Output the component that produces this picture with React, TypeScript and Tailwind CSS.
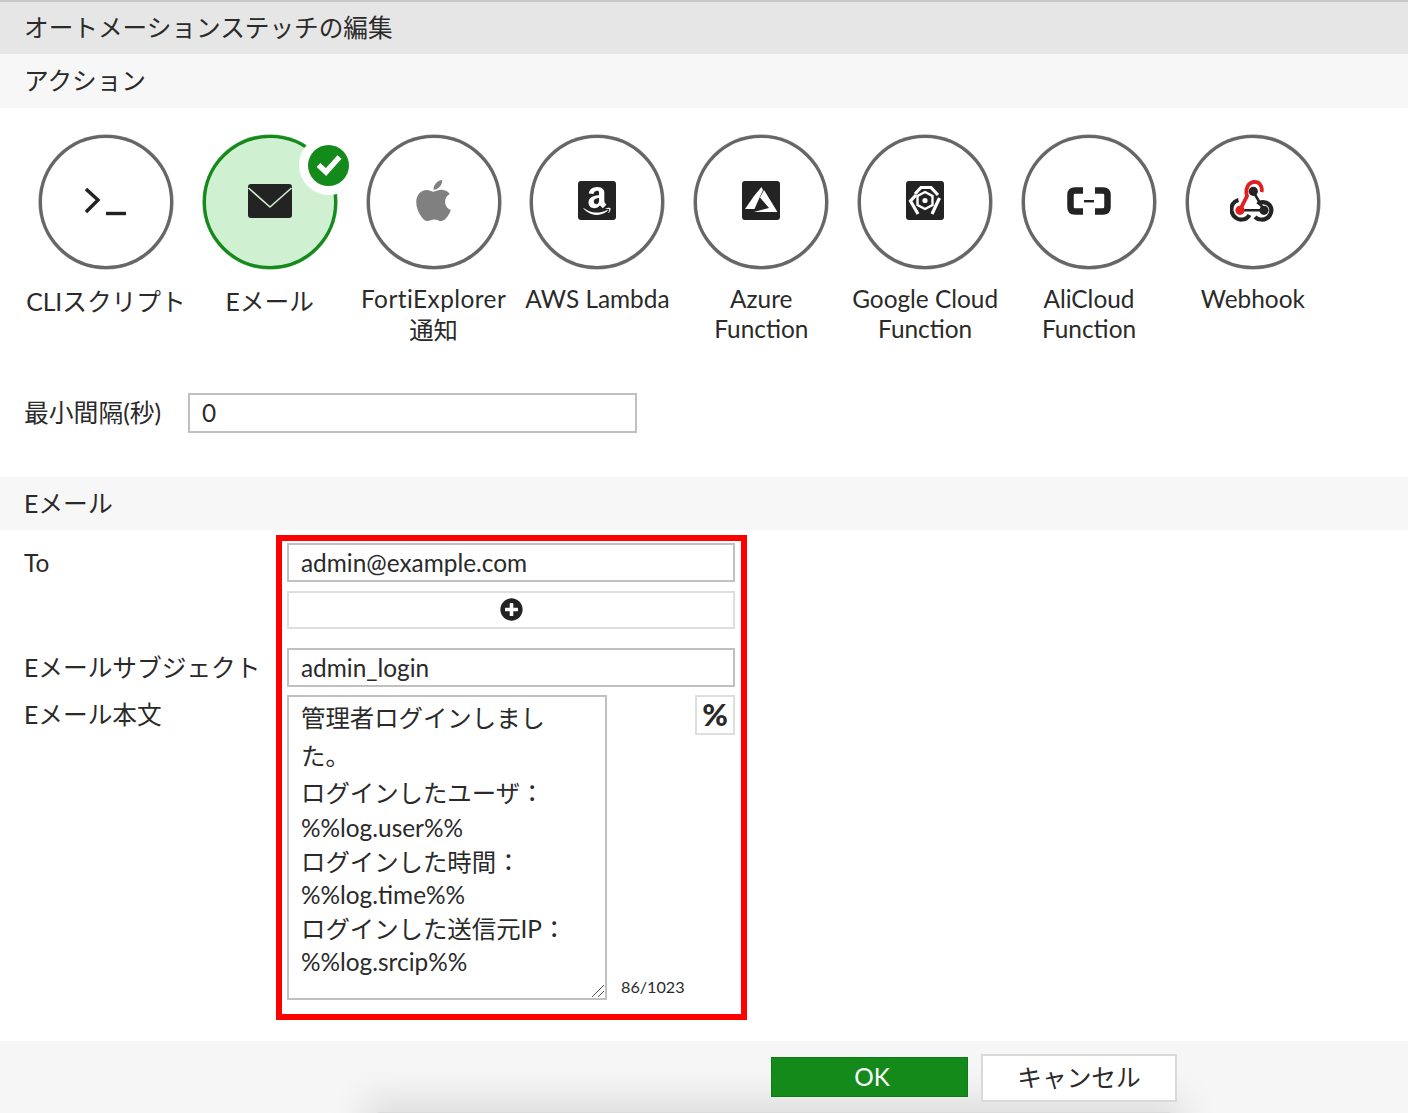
import React from "react";
import { FaApple, FaAmazon, FaPlusCircle } from "react-icons/fa";

const Square = ({ children }: { children: React.ReactNode }) => (
  <div className="flex h-[39px] w-[38px] items-center justify-center rounded-[3px] bg-[#232323] text-white">{children}</div>
);

const Terminal = () => (
  <svg className="ml-[2px] mt-[3px]" width="44" height="30" viewBox="0 0 44 30" fill="none" stroke="#222" strokeWidth="3.4">
    <path d="M1 2 L13 13 L1 25" />
    <path d="M21 26.5 H41" />
  </svg>
);

const Mail = () => (
  <svg width="46" height="36" viewBox="0 0 46 36">
    <rect x="1" y="1" width="44" height="34" rx="3" fill="#232323" />
    <path d="M1.5 5 L23 24 L44.5 5" fill="none" stroke="#d0f0d2" strokeWidth="1.6" />
  </svg>
);

const Azure = () => (
  <Square>
    <svg width="38" height="39" viewBox="0 0 38 39" fill="#fff">
      <polygon points="3,28 12,15 19.5,6 21,9 16,20 12.5,28" />
      <polygon points="22,9 35.5,31 12,31 27,27 18,16.5" />
    </svg>
  </Square>
);

const GoogleFn = () => (
  <Square>
    <svg width="38" height="39" viewBox="0 0 38 39" fill="none" stroke="#fff" strokeWidth="3.2">
      <path d="M9 13 L15 6.5 H25 L32 14" />
      <path d="M10 14 L4.5 20 L12 33" />
      <path d="M33.5 17 L26 33" />
      <path d="M19 11 L26.5 15 V24 L19 28 L11.5 24 V15 Z" strokeWidth="2.4" />
      <circle cx="19" cy="19.5" r="2.6" fill="#fff" stroke="none" />
    </svg>
  </Square>
);

const Ali = () => (
  <svg width="44" height="28" viewBox="0 0 44 28" fill="none">
    <path d="M16 3.5 L8 3.5 Q3.5 3.5 3.5 8 V20 Q3.5 24.5 8 24.5 L16 24.5" stroke="#232323" strokeWidth="6.5" />
    <path d="M28 3.5 L36 3.5 Q40.5 3.5 40.5 8 V20 Q40.5 24.5 36 24.5 L28 24.5" stroke="#232323" strokeWidth="6.5" />
    <rect x="17" y="13" width="10" height="2.4" fill="#232323" />
  </svg>
);

const Webhook = () => (
  <svg width="46" height="42" viewBox="0 0 46 42" fill="none">
    <path d="M23.3 11.3 L34 30.3 H10" stroke="#232323" strokeWidth="2.6" />
    <path d="M8.5 20 C3 21.5 1 26 1.5 30.5 C2.5 37 8 40 12 39.5 C15.5 39.5 18 37.5 19.5 35" stroke="#232323" strokeWidth="4.2" />
    <path d="M28 24.5 C31 20.5 38 22 40.5 26.5 C43 31.5 39.5 40 31 39.5 C28.5 39.5 26.5 38.5 25 37" stroke="#232323" strokeWidth="4.2" />
    <path d="M10 30 L17 16 C15 9 18 2.5 24 2 C29 1.5 33 6 31.5 12" stroke="#e02020" strokeWidth="3.8" />
    <circle cx="23.3" cy="11.3" r="4.6" fill="#232323" />
    <circle cx="34" cy="30.3" r="4.6" fill="#232323" />
    <circle cx="10" cy="30.3" r="4.6" fill="#e02020" />
  </svg>
);

const items: { label: React.ReactNode; icon: React.ReactNode; selected?: boolean; cjk?: boolean }[] = [
  { label: "CLIスクリプト", icon: <Terminal />, cjk: true },
  { label: "Eメール", icon: <Mail />, selected: true, cjk: true },
  { label: <><span className="tracking-[0.45px]">FortiExplorer</span><br /><span className="mt-[1px] block">通知</span></>, icon: <FaApple size={47} color="#808080" /> },
  { label: "AWS Lambda", icon: <Square><FaAmazon size={32} /></Square> },
  { label: <>Azure<br />Function</>, icon: <Azure /> },
  { label: <>Google Cloud<br />Function</>, icon: <GoogleFn /> },
  { label: <>AliCloud<br />Function</>, icon: <Ali /> },
  { label: "Webhook", icon: <Webhook /> },
];

const lines: [string, string][] = [
  ["管理者ログインしまし", "h-[37px]"],
  ["た。", "h-[38px]"],
  ["ログインしたユーザ：", "h-[37px]"],
  ["%%log.user%%", "h-[33px]"],
  ["ログインした時間：", "h-[34px]"],
  ["%%log.time%%", "h-[33px]"],
  ["ログインした送信元IP：", "h-[34px]"],
  ["%%log.srcip%%", "h-[33px]"],
];

export default function App() {
  return (
    <div className="relative flex h-[1113px] flex-col overflow-hidden bg-white font-['Lato','Noto_Sans_CJK_JP',sans-serif] text-[24.4px] text-[#2a2a2a]">
      <header className="flex h-[54px] shrink-0 items-center border-t-2 border-[#c9c9c9] bg-[#e6e6e6] pl-6 text-[24.65px]">
        オートメーションステッチの編集
      </header>
      <div className="flex h-[54px] shrink-0 items-center bg-[#f7f7f7] pl-6 text-[24.65px]">アクション</div>

      <div className="flex pl-6 pt-[27px]">
        {items.map((it, i) => (
          <div key={i} className="flex w-[163.85px] flex-col items-center text-center leading-[30px]">
            <div
              className={
                it.selected
                  ? "relative flex h-[134px] w-[134px] items-center justify-center rounded-full border-[3px] border-[#148a1a] bg-[#d0f0d2] pb-[3px] shadow-[0_0_0_0.6px_#4aa24e]"
                  : "relative flex h-[134px] w-[134px] items-center justify-center rounded-full border-[3px] border-[#666666] bg-white pb-[3px] shadow-[0_0_0_0.6px_#8a8a8a]"
              }
            >
              {it.icon}
              {it.selected && (
                <div className="absolute left-[93px] top-[-3px] flex h-[60px] w-[60px] items-center justify-center rounded-full bg-white">
                  <div className="flex h-[41px] w-[41px] items-center justify-center rounded-full bg-[#148a1a]">
                    <svg width="26" height="22" viewBox="0 0 26 22" fill="none" stroke="#fff" strokeWidth="5.5">
                      <path d="M2.5 11 L10 18 L23.5 3" />
                    </svg>
                  </div>
                </div>
              )}
            </div>
            <div className={it.cjk ? "mt-[18px] whitespace-nowrap text-[24.7px]" : "mt-[15px] whitespace-nowrap"}>{it.label}</div>
          </div>
        ))}
      </div>

      <div className="absolute left-6 top-[393px] flex h-10 items-center">
        <span className="w-[164px] text-[24.8px]">最小間隔(秒)</span>
        <div className="flex h-10 w-[449px] items-center border-2 border-[#c0c0c0] pl-3">0</div>
      </div>

      <div className="mt-auto flex h-[53px] shrink-0 items-center bg-[#f7f7f7] pl-6 text-[24.8px]">Eメール</div>

      <div className="relative flex h-[511px] shrink-0 flex-col pl-6 pt-[13px]">
        <div className="absolute left-[276px] top-[5px] h-[485px] w-[471px] border-[6px] border-[#ff0000]" />

        <div className="flex">
          <span className="w-[263px] leading-[39px]">To</span>
          <div className="flex h-[39px] w-[448px] items-center border-2 border-[#c0c0c0] pl-3 pt-[1px]">admin@example.com</div>
        </div>
        <div className="mt-[9px] flex pl-[263px]">
          <div className="flex h-[38px] w-[448px] items-center justify-center border-2 border-[#dedede] pb-[1px]">
            <FaPlusCircle size={23} color="#232323" />
          </div>
        </div>
        <div className="mt-[19px] flex">
          <span className="w-[263px] whitespace-nowrap text-[24.7px] leading-[39px]">Eメールサブジェクト</span>
          <div className="flex h-[39px] w-[448px] items-center border-2 border-[#c0c0c0] pl-3 pt-[1px]">admin_login</div>
        </div>
        <div className="mt-2 flex">
          <span className="w-[263px] whitespace-nowrap text-[24.7px] leading-[40px]">Eメール本文</span>
          <div className="relative h-[305px] w-[320px] border-2 border-[#c0c0c0] pl-3 pt-[3px]">
            {lines.map(([t, h], i) => (
              <div key={i} className={`flex items-center whitespace-nowrap ${h}`}>{t}</div>
            ))}
            <svg className="absolute bottom-0 right-0" width="16" height="16" viewBox="0 0 16 16" stroke="#555" strokeWidth="1" fill="none">
              <path d="M3 15 L15 3 M9 15 L15 9" />
            </svg>
          </div>
          <div className="relative ml-[14px] w-[114px]">
            <div className="absolute right-0 top-0 flex h-10 w-10 items-center justify-center border-2 border-[#dedede] pb-[2px] text-[31px] font-black">%</div>
            <span className="absolute bottom-[1px] left-0 text-[16.2px] leading-[24px]">86/1023</span>
          </div>
        </div>
      </div>

      <footer className="relative flex h-[72px] shrink-0 items-start bg-[#f6f6f6] pl-[771px]">
        <div className="absolute left-[378px] top-[71px] h-10 w-[792px] bg-[#dcdcdc] shadow-[0_0_36px_14px_rgba(0,0,0,0.1)]" />
        <button className="relative mt-4 flex h-10 w-[197px] items-center justify-center border border-[#0f7a15] bg-[#148a1a] pl-[5px] text-white">OK</button>
        <button className="relative ml-[13px] mt-[13px] flex h-12 w-[196px] items-center justify-center border-2 border-[#d9d9d9] bg-white text-[24.7px]">キャンセル</button>
      </footer>
    </div>
  );
}
